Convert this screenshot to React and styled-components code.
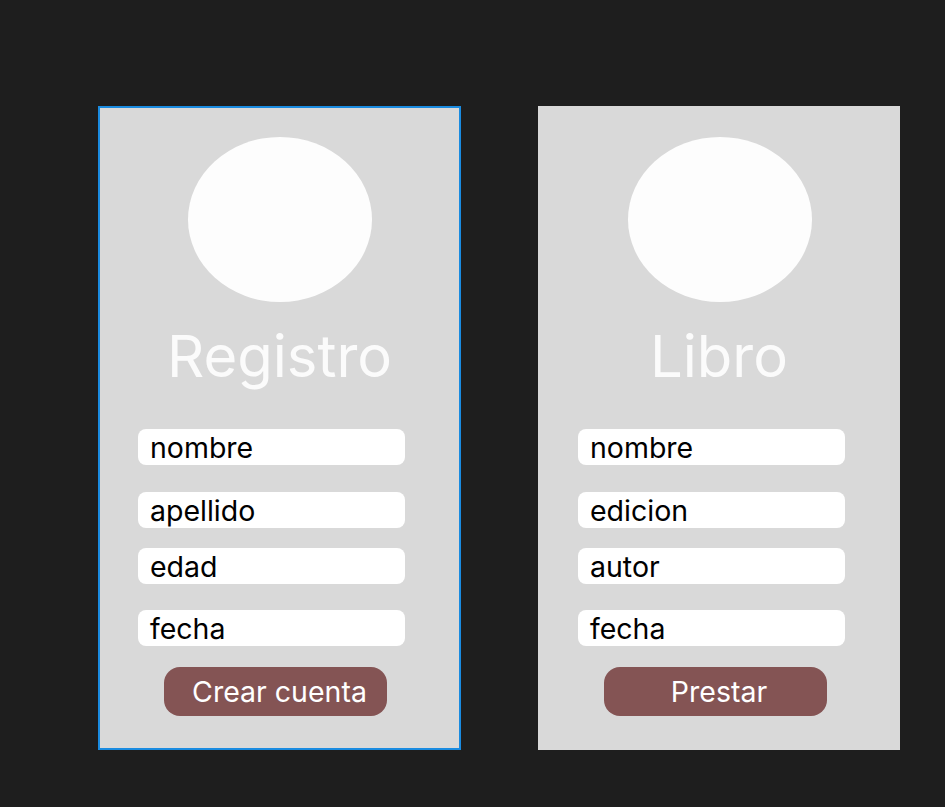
import React from 'react';
import styled, { createGlobalStyle } from 'styled-components';

const darkBG = '#1e1e1e';
const cardBG = '#d9d9d9';
const accent = '#845454';
const selectBlue = '#1a8be0';
const font = 'Inter, "Noto Sans", Arial, sans-serif';

const GlobalStyle = createGlobalStyle`
  html, body {
    margin: 0;
    padding: 0;
    background: ${darkBG};
    height: 100%;
  }
  #root {
    min-height: 100%;
  }
`;

const Page = styled.div`
  display: flex;
  gap: 77px;
  padding: 106px 0 0 98px;
  min-height: 807px;
  box-sizing: border-box;
  font-family: ${font};
`;

const Card = styled.section`
  width: ${p => (p.$selected ? 363 : 362)}px;
  height: 644px;
  box-sizing: border-box;
  background: ${cardBG};
  display: flex;
  flex-direction: column;
  align-items: center;
  padding-top: 31px;
  box-shadow: ${p => (p.$selected ? `inset 0 0 0 2px ${selectBlue}` : 'none')};
`;

const Avatar = styled.div`
  width: 184px;
  height: 165px;
  border-radius: 50%;
  background: #fdfdfd;
  margin-left: 1px;
`;

const Title = styled.h1`
  margin: 19px 0 0;
  font-size: 58px;
  font-weight: 400;
  line-height: 70px;
  color: #fbfbfb;
`;

const Fields = styled.div`
  align-self: flex-start;
  margin: 38px 0 0 40px;
  display: flex;
  flex-direction: column;
`;

const Field = styled.div`
  width: 267px;
  height: 36px;
  box-sizing: border-box;
  margin-top: ${p => p.$gap}px;
  padding: 1px 0 0 12px;
  background: #fff;
  border-radius: 8px;
  font-size: 28.5px;
  line-height: 35px;
  color: #000;
  white-space: nowrap;
`;

const Button = styled.button`
  margin: 21px 8px 0 0;
  width: 223px;
  height: 49px;
  border: none;
  border-radius: 16px;
  background: ${accent};
  color: #fff;
  font-family: ${font};
  font-size: 28.5px;
  padding: 0 0 0 8px;
  line-height: 49px;
`;

const FormCard = ({ title, fields, action, selected }) => (
  <Card $selected={selected}>
    <Avatar />
    <Title>{title}</Title>
    <Fields>
      {fields.map((f, i) => (
        <Field key={f} $gap={[0, 27, 20, 26][i]}>{f}</Field>
      ))}
    </Fields>
    <Button>{action}</Button>
  </Card>
);

const App = () => (
  <>
    <GlobalStyle />
    <Page>
      <FormCard
        selected
        title="Registro"
        fields={['nombre', 'apellido', 'edad', 'fecha']}
        action="Crear cuenta"
      />
      <FormCard
        title="Libro"
        fields={['nombre', 'edicion', 'autor', 'fecha']}
        action="Prestar"
      />
    </Page>
  </>
);

export default App;
